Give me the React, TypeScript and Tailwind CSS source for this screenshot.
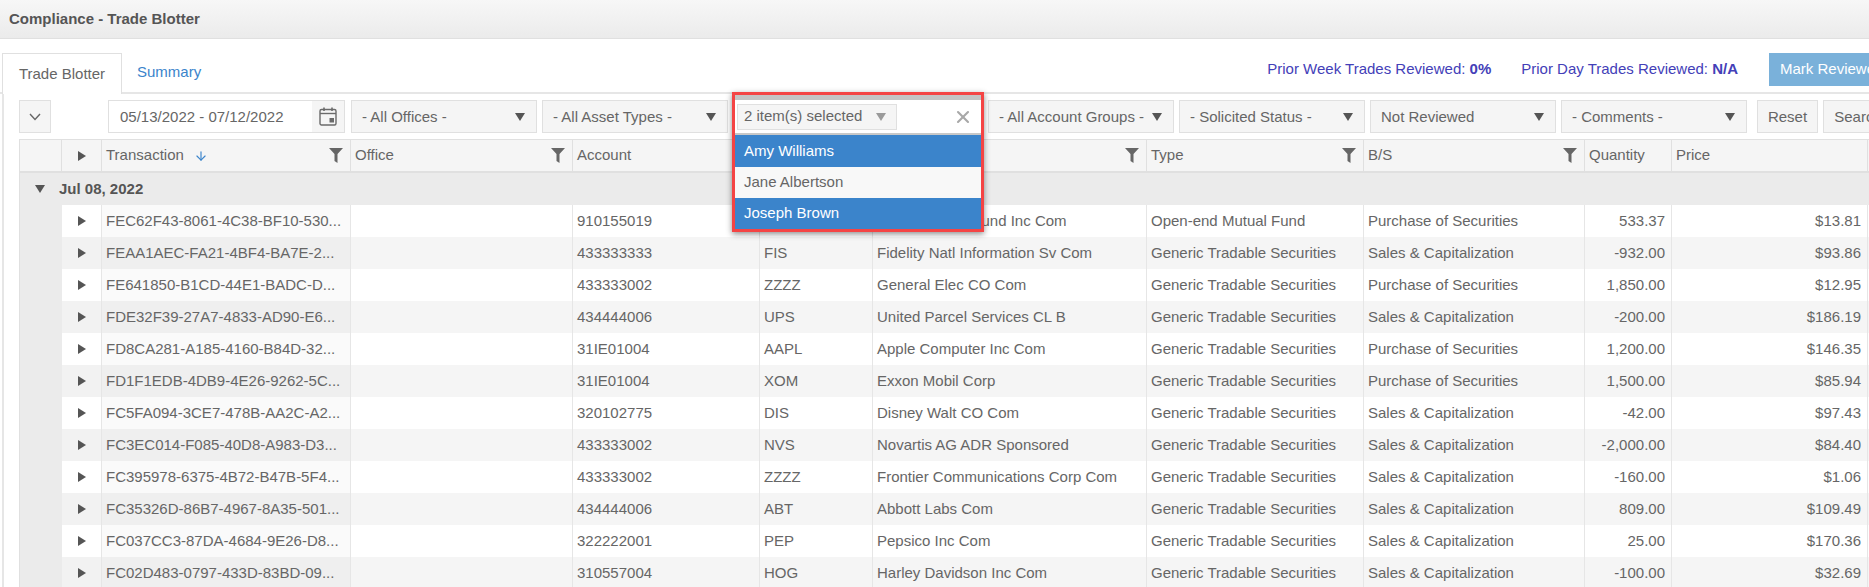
import { ArrowDown, X } from "lucide-react"

const gridCols = "grid grid-cols-[42px_40px_249px_222px_187px_113px_274px_217px_221px_87px_196px_120px]"

const rows = [
  ["FEC62F43-8061-4C38-BF10-530...", "910155019", "", "Vanguard Tax Fund Inc Com", "Open-end Mutual Fund", "Purchase of Securities", "533.37", "$13.81"],
  ["FEAA1AEC-FA21-4BF4-BA7E-2...", "433333333", "FIS", "Fidelity Natl Information Sv Com", "Generic Tradable Securities", "Sales & Capitalization", "-932.00", "$93.86"],
  ["FE641850-B1CD-44E1-BADC-D...", "433333002", "ZZZZ", "General Elec CO Com", "Generic Tradable Securities", "Purchase of Securities", "1,850.00", "$12.95"],
  ["FDE32F39-27A7-4833-AD90-E6...", "434444006", "UPS", "United Parcel Services CL B", "Generic Tradable Securities", "Sales & Capitalization", "-200.00", "$186.19"],
  ["FD8CA281-A185-4160-B84D-32...", "31IE01004", "AAPL", "Apple Computer Inc Com", "Generic Tradable Securities", "Purchase of Securities", "1,200.00", "$146.35"],
  ["FD1F1EDB-4DB9-4E26-9262-5C...", "31IE01004", "XOM", "Exxon Mobil Corp", "Generic Tradable Securities", "Purchase of Securities", "1,500.00", "$85.94"],
  ["FC5FA094-3CE7-478B-AA2C-A2...", "320102775", "DIS", "Disney Walt CO Com", "Generic Tradable Securities", "Sales & Capitalization", "-42.00", "$97.43"],
  ["FC3EC014-F085-40D8-A983-D3...", "433333002", "NVS", "Novartis AG ADR Sponsored", "Generic Tradable Securities", "Sales & Capitalization", "-2,000.00", "$84.40"],
  ["FC395978-6375-4B72-B47B-5F4...", "433333002", "ZZZZ", "Frontier Communications Corp Com", "Generic Tradable Securities", "Sales & Capitalization", "-160.00", "$1.06"],
  ["FC35326D-86B7-4967-8A35-501...", "434444006", "ABT", "Abbott Labs Com", "Generic Tradable Securities", "Sales & Capitalization", "809.00", "$109.49"],
  ["FC037CC3-87DA-4684-9E26-D8...", "322222001", "PEP", "Pepsico Inc Com", "Generic Tradable Securities", "Sales & Capitalization", "25.00", "$170.36"],
  ["FC02D483-0797-433D-83BD-09...", "310557004", "HOG", "Harley Davidson Inc Com", "Generic Tradable Securities", "Sales & Capitalization", "-100.00", "$32.69"],
]

function TriRight() {
  return (
    <svg width="8" height="10" viewBox="0 0 8 10" className="fill-[#555]">
      <path d="M0 0 L8 5 L0 10 Z" />
    </svg>
  )
}

function TriDown({ className = "fill-[#555]" }: { className?: string }) {
  return (
    <svg width="10" height="8" viewBox="0 0 10 8" className={className}>
      <path d="M0 0 H10 L5 8 Z" />
    </svg>
  )
}

function FilterIcon() {
  return (
    <svg width="14" height="15" viewBox="0 0 14 15" className="fill-[#666] shrink-0">
      <path d="M0 0 H14 L8.5 6 V15 L5.5 13 V6 Z" />
    </svg>
  )
}

function CalendarIcon() {
  return (
    <svg width="18" height="19" viewBox="0 0 18 19" fill="none" className="stroke-[#6b6b6b]">
      <rect x="1" y="2.5" width="16" height="15.5" rx="1.5" strokeWidth="1.4" />
      <path d="M1 6.5 H17" strokeWidth="1.4" />
      <path d="M5 0.5 V4 M13 0.5 V4" strokeWidth="1.6" />
      <rect x="10.5" y="11" width="4.5" height="4.5" className="fill-[#6b6b6b] stroke-none" />
    </svg>
  )
}

function Select({ label, width = "w-[186px]" }: { label: string; width?: string }) {
  return (
    <div className={`${width} h-[33px] shrink-0 flex items-center justify-between pl-[10px] pr-[6px] bg-[#f5f5f5] border border-[#e0e0e0] overflow-hidden`}>
      <span className="pt-[1px] whitespace-nowrap overflow-hidden">{label}</span>
      <span className="w-[20px] shrink-0 flex justify-center">
        <TriDown />
      </span>
    </div>
  )
}

function HeadCell({ label, filter, sort }: { label: string; filter?: boolean; sort?: boolean }) {
  return (
    <div className="flex items-center justify-between pl-[4px] pr-[7px] border-r border-[#e0e0e0]">
      <span className="flex items-center gap-[10px]">
        {label}
        {sort && <ArrowDown size={14} strokeWidth={2} className="text-[#3b84cb]" />}
      </span>
      {filter && <FilterIcon />}
    </div>
  )
}

function PeopleDropdown() {
  return (
    <div className="absolute left-[-1px] top-[-8px] w-[252px] z-10 border-[3px] border-[#f44444] bg-white shadow-[0_2px_6px_rgba(0,0,0,0.45)]">
      <div className="h-[5px] bg-[#c4c4c4]" />
      <div className="h-[35px] flex items-center justify-between pl-[2px] pr-[8px] border-b-2 border-[#c8c8c8]">
        <div className="w-[160px] h-[26px] flex items-center justify-between pl-[6px] pr-[10px] bg-[#f5f5f5] border border-[#e0e0e0]">
          <span className="whitespace-nowrap">2 item(s) selected</span>
          <TriDown className="fill-[#9a9a9a]" />
        </div>
        <X size={20} strokeWidth={2.5} className="text-[#a8a8a8]" />
      </div>
      <div className="h-[32px] pl-[9px] flex items-center bg-[#3b84cb] text-white">Amy Williams</div>
      <div className="h-[31px] pl-[9px] flex items-center bg-[#f8f8f8]">Jane Albertson</div>
      <div className="h-[31px] pl-[9px] flex items-center bg-[#3b84cb] text-white">Joseph Brown</div>
    </div>
  )
}

export default function App() {
  return (
    <div className="w-[1869px] h-[587px] overflow-hidden bg-white text-[15px] text-[#666] font-['Liberation_Sans',Arial,sans-serif]">
      <div className="h-[39px] pl-[9px] flex items-center bg-gradient-to-b from-[#f7f7f7] to-[#ebebeb] border-b border-[#e0e0e0] font-bold text-[#555]">
        Compliance - Trade Blotter
      </div>

      <div className="h-[55px] pl-[2px] pt-[14px] flex items-start border-b-2 border-[#e6e6e6]">
        <div className="w-[120px] h-[41px] flex items-center justify-center bg-white border border-b-0 border-[#e0e0e0]">
          Trade Blotter
        </div>
        <div className="ml-[15px] h-[39px] flex items-center text-[#3b84cb]">Summary</div>
        <div className="ml-auto h-[33px] flex items-center text-[#4340b8] whitespace-nowrap">
          <span>
            Prior Week Trades Reviewed: <b>0%</b>
          </span>
          <span className="ml-[30px]">
            Prior Day Trades Reviewed: <b>N/A</b>
          </span>
          <div className="ml-[31px] w-[100px] h-[33px] pl-[11px] flex items-center bg-[#7ab1da] text-white">Mark Reviewed</div>
        </div>
      </div>

      <div className="ml-[2px] pl-[15px] border-l-2 border-[#e6e6e6] w-[2000px]">
        <div className="pt-[6px] flex">
          <div className="w-[32px] h-[33px] flex items-center justify-center bg-[#f5f5f5] border border-[#e0e0e0]">
            <svg width="12" height="8" viewBox="0 0 12 8" fill="none" className="stroke-[#666]">
              <path d="M1 1 L6 6.5 L11 1" strokeWidth="1.4" />
            </svg>
          </div>
          <div className="ml-[57px] w-[237px] h-[33px] flex items-center border border-[#e0e0e0]">
            <span className="pl-[11px] pt-[1px] flex-1">05/13/2022 - 07/12/2022</span>
            <span className="w-[32px] h-full flex items-center justify-center bg-[#f5f5f5]">
              <CalendarIcon />
            </span>
          </div>
          <div className="ml-[6px] flex gap-[5px]">
            <Select label="- All Offices -" />
            <Select label="- All Asset Types -" />
            <div className="relative w-[250px] shrink-0">
              <PeopleDropdown />
            </div>
            <Select label="- All Account Groups -" />
            <Select label="- Solicited Status -" />
            <Select label="Not Reviewed" />
            <Select label="- Comments -" />
          </div>
          <div className="ml-[10px] flex gap-[5px]">
            <div className="w-[61px] h-[33px] pt-[1px] flex items-center justify-center bg-[#f5f5f5] border border-[#e0e0e0]">Reset</div>
            <div className="w-[70px] h-[33px] pt-[1px] flex items-center justify-center bg-[#f5f5f5] border border-[#e0e0e0]">Search</div>
          </div>
        </div>

        <div className="mt-[6px] border-t border-l border-[#e0e0e0]">
          <div className={`${gridCols} h-[33px] bg-[#f5f5f5] border-b-2 border-[#e0e0e0]`}>
            <div className="border-r border-[#e0e0e0]" />
            <div className="flex items-center justify-center border-r border-[#e0e0e0]">
              <TriRight />
            </div>
            <HeadCell label="Transaction" filter sort />
            <HeadCell label="Office" filter />
            <HeadCell label="Account" filter />
            <HeadCell label="Symbol" filter />
            <HeadCell label="Security" filter />
            <HeadCell label="Type" filter />
            <HeadCell label="B/S" filter />
            <HeadCell label="Quantity" />
            <HeadCell label="Price" />
            <HeadCell label="" />
          </div>

          <div className="h-[32px] pl-[15px] flex items-center gap-[14px] bg-[#ebebeb] font-bold text-[#555]">
            <TriDown />
            <span>Jul 08, 2022</span>
          </div>

          {rows.map((row, i) => (
            <div key={row[0]} className={`${gridCols} h-[32px] items-stretch`}>
              <div className="bg-[#ebebeb]" />
              <div className={`flex items-center justify-center border-r border-[#e6e6e6] ${i % 2 ? "bg-[#f2f2f2]" : "bg-white"}`}>
                <TriRight />
              </div>
              <div className={`flex items-center pl-[4px] border-r border-[#e6e6e6] whitespace-nowrap overflow-hidden ${i % 2 ? "bg-[#efefef]" : "bg-[#fafafa]"}`}>
                {row[0]}
              </div>
              {["", row[1], row[2], row[3], row[4], row[5]].map((cell, j) => (
                <div key={j} className={`flex items-center pl-[4px] border-r border-[#e6e6e6] whitespace-nowrap overflow-hidden ${i % 2 ? "bg-[#f5f5f5]" : "bg-white"}`}>
                  {cell}
                </div>
              ))}
              <div className={`flex items-center justify-end pr-[6px] border-r border-[#e6e6e6] ${i % 2 ? "bg-[#f5f5f5]" : "bg-white"}`}>{row[6]}</div>
              <div className={`flex items-center justify-end pr-[6px] border-r border-[#e6e6e6] ${i % 2 ? "bg-[#f5f5f5]" : "bg-white"}`}>{row[7]}</div>
              <div className={`border-r border-[#e6e6e6] ${i % 2 ? "bg-[#f5f5f5]" : "bg-white"}`} />
            </div>
          ))}
        </div>
      </div>
    </div>
  )
}
